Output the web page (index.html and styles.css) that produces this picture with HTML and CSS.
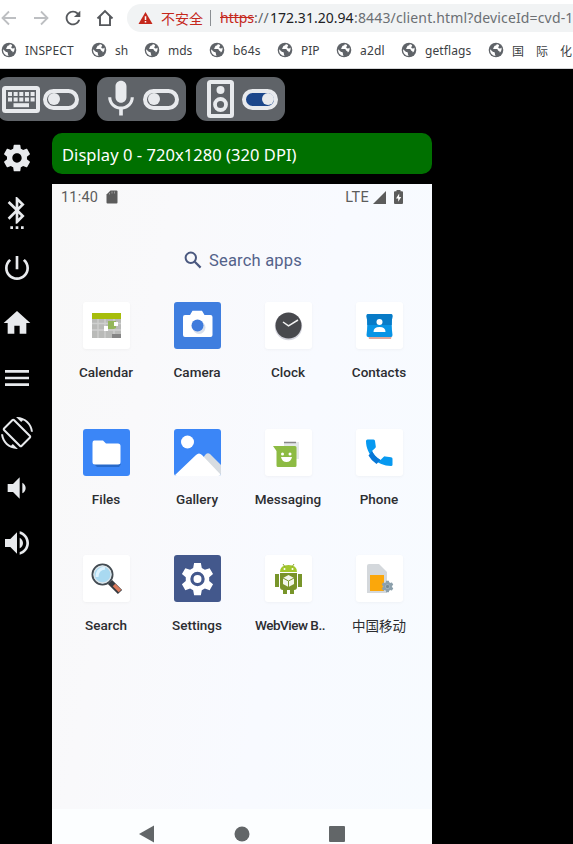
FILE: index.html
```html
<!DOCTYPE html>
<html lang="en">
<head>
<meta charset="utf-8">
<title>Device client</title>
<link rel="stylesheet" href="styles.css">
</head>
<body>
<svg class="defs" aria-hidden="true">
  <symbol id="globe" viewBox="0 0 16 16"><circle cx="8" cy="8" r="7.3" fill="#5f6368"/><path d="M2.1 7.2 4.8 9.8c.6.5 1.6.1 1.9.8.3.8.1 2.6 1 3.2C4.6 13.9 1.8 11.4 2.1 7.2ZM8.8 2.1c-.2 1.4-.7 1.6-2 1.7-.9.2-.4 1.3-1.1 1.8-.7.4-.9 1.3.1 1.5h3.1c1.1.2.8 1.7 1.8 1.9.9.1 1.1.7 1 1.6 1.6-1.2 2.3-3.3 1.7-5.2-.8 1.5-2.5 1.3-3 .4-.6-.9.6-1.2.7-2 .1-.7-.8-1.2-2.3-1.7Z" fill="#fff"/></symbol>
  <symbol id="gear" viewBox="0 0 24 24"><path d="M19.43 12.98c.04-.32.07-.64.07-.98s-.03-.66-.07-.98l2.11-1.65c.19-.15.24-.42.12-.64l-2-3.46c-.12-.22-.39-.3-.61-.22l-2.49 1c-.52-.4-1.08-.73-1.69-.98l-.38-2.65C14.46 2.18 14.25 2 14 2h-4c-.25 0-.46.18-.49.42l-.38 2.65c-.61.25-1.17.59-1.69.98l-2.49-1c-.23-.09-.49 0-.61.22l-2 3.46c-.13.22-.07.49.12.64l2.11 1.65c-.04.32-.07.65-.07.98s.03.66.07.98l-2.11 1.65c-.19.15-.24.42-.12.64l2 3.46c.12.22.39.3.61.22l2.49-1c.52.4 1.08.73 1.69.98l.38 2.65c.03.24.24.42.49.42h4c.25 0 .46-.18.49-.42l.38-2.65c.61-.25 1.17-.59 1.69-.98l2.49 1c.23.09.49 0 .61-.22l2-3.46c.12-.22.07-.49-.12-.64l-2.11-1.65zM12 15.5c-1.93 0-3.5-1.57-3.5-3.5s1.57-3.5 3.5-3.5 3.5 1.57 3.5 3.5-1.57 3.5-3.5 3.5z"/></symbol>
</svg>

<header class="browser">
  <div class="toolbar">
    <svg class="nav" viewBox="0 0 18 18"><path d="M16 9H3M9 2.5 2.5 9 9 15.500" fill="none" stroke="#bdbfc2" stroke-width="1.8"/></svg>
    <svg class="nav" viewBox="0 0 18 18"><path d="M2 9h13M9 2.500 15.500 9 9 15.500" fill="none" stroke="#bdbfc2" stroke-width="1.8"/></svg>
    <svg class="nav reload" viewBox="0 0 24 24"><path fill="#55585c" d="M17.650 6.350C16.200 4.900 14.210 4 12 4c-4.420 0-7.990 3.580-7.990 8s3.570 8 7.990 8c3.730 0 6.840-2.550 7.730-6h-2.080c-.82 2.330-3.040 4-5.650 4-3.310 0-6-2.690-6-6s2.690-6 6-6c1.660 0 3.140.69 4.220 1.780L13 11h7V4l-2.350 2.350z"/></svg>
    <svg class="nav" viewBox="0 0 18 18"><path d="M1.500 9.500 9 2l7.500 7.500M4 7.500v8.600h10V7.500" fill="none" stroke="#55585c" stroke-width="1.900"/></svg>
    <div class="address">
      <svg class="warn" viewBox="0 0 16 14"><path d="M8 .5 15.500 13.500H.5Z" fill="#c5281c"/><path d="M7.200 5h1.600v4H7.200ZM7.200 10.200h1.600v1.600H7.200Z" fill="#fff"/></svg>
      <span class="insecure">不安全</span>
      <span class="divider"></span>
      <span class="url"><span class="scheme">https</span><span class="sep">://</span><span class="host">172.31.20.94</span><span class="path">:8443/client.html?deviceId=cvd-1</span></span>
    </div>
  </div>
  <nav class="bookmarks">
    <span class="mark m1"><svg><use href="#globe"/></svg>INSPECT</span>
    <span class="mark m2"><svg><use href="#globe"/></svg>sh</span>
    <span class="mark m3"><svg><use href="#globe"/></svg>mds</span>
    <span class="mark m4"><svg><use href="#globe"/></svg>b64s</span>
    <span class="mark m5"><svg><use href="#globe"/></svg>PIP</span>
    <span class="mark m6"><svg><use href="#globe"/></svg>a2dl</span>
    <span class="mark m7"><svg><use href="#globe"/></svg>getflags</span>
    <span class="mark cjk"><svg><use href="#globe"/></svg><span>国</span><span>际</span><span>化</span></span>
  </nav>
</header>

<main class="client">
  <div class="toggles">
    <div class="pill first">
      <svg class="kb" viewBox="0 0 38 27"><rect x="2" y="2" width="34" height="23" rx="1.500" fill="none" stroke="#e8eaed" stroke-width="4"/><path d="M6 8h27M6 13.500h27" stroke="#e8eaed" stroke-width="4" stroke-dasharray="4 1.650" fill="none"/><path d="M11.500 19.200h15.500" stroke="#e8eaed" stroke-width="4"/></svg>
      <span class="switch"></span>
    </div>
    <div class="pill">
      <svg class="mic" viewBox="0 0 24 24"><path d="M12 14c1.660 0 2.990-1.340 2.990-3L15 5c0-1.660-1.340-3-3-3S9 3.340 9 5v6c0 1.660 1.340 3 3 3zm5.300-3c0 3-2.540 5.100-5.300 5.100S6.700 14 6.700 11H5c0 3.410 2.720 6.230 6 6.720V21h2v-3.280c3.280-.48 6-3.300 6-6.720h-1.700z"/></svg>
      <span class="switch"></span>
    </div>
    <div class="pill">
      <svg class="speaker" viewBox="0 0 27 38"><rect x="2" y="2" width="23" height="34" rx="1.500" fill="none" stroke="#e8eaed" stroke-width="4"/><circle cx="13.500" cy="10" r="4"/><circle cx="13.500" cy="24.500" r="5.500" fill="none" stroke="#e8eaed" stroke-width="3.800"/></svg>
      <span class="switch on"></span>
    </div>
  </div>

  <div class="workspace">
    <aside class="controls">
      <svg><use href="#gear"/></svg>
      <svg viewBox="0 0 24 24"><path d="M11 24h2v-2h-2v2zm-4 0h2v-2H7v2zm8 0h2v-2h-2v2zm2.710-18.290L12 0h-1v7.590L6.410 3 5 4.410 10.590 10 5 15.590 6.410 17 11 12.410V20h1l5.710-5.710-4.300-4.290 4.300-4.290zM13 3.830l1.880 1.880L13 7.590V3.830zm1.880 10.460L13 16.170v-3.760l1.880 1.880z"/></svg>
      <svg viewBox="0 0 24 24"><path d="M13 3h-2v10h2V3zm4.830 2.170l-1.420 1.420C17.990 7.860 19 9.810 19 12c0 3.870-3.130 7-7 7s-7-3.130-7-7c0-2.190 1.010-4.140 2.580-5.420L6.170 5.170C4.230 6.820 3 9.260 3 12c0 4.970 4.030 9 9 9s9-4.030 9-9c0-2.740-1.230-5.180-3.170-6.830z"/></svg>
      <svg viewBox="0 0 24 24"><path d="M10 20v-6h4v6h5v-8h3L12 3 2 12h3v8z"/></svg>
      <svg viewBox="0 0 24 24"><path d="M3 18h18v-2H3v2zm0-5h18v-2H3v2zm0-7v2h18V6H3z"/></svg>
      <svg viewBox="0 0 24 24"><path d="M16.480 2.520c3.270 1.550 5.610 4.720 5.970 8.480h1.500C23.440 4.840 18.290 0 12 0l-.66.03 3.810 3.810 1.330-1.320zm-6.250-.77c-.59-.59-1.540-.59-2.120 0L1.750 8.110c-.59.59-.59 1.540 0 2.120l12.020 12.020c.59.59 1.540.59 2.120 0l6.360-6.360c.59-.59.59-1.540 0-2.120L10.230 1.750zm4.600 19.440L2.810 9.170l6.360-6.360 12.020 12.020-6.360 6.360zm-7.310.29C4.250 19.940 1.910 16.760 1.550 13H.05C.56 19.160 5.710 24 12 24l.66-.03-3.810-3.810-1.330 1.320z"/></svg>
      <svg viewBox="0 0 24 24"><path d="M18.500 12c0-1.770-1.020-3.290-2.500-4.030v8.050c1.480-.73 2.500-2.250 2.500-4.020zM5 9v6h4l5 5V4L9 9H5z"/></svg>
      <svg viewBox="0 0 24 24"><path d="M3 9v6h4l5 5V4L7 9H3zm13.500 3c0-1.770-1.020-3.290-2.500-4.030v8.050c1.480-.73 2.500-2.250 2.500-4.020zM14 3.230v2.060c2.890.86 5 3.540 5 6.710s-2.110 5.850-5 6.710v2.060c4.010-.91 7-4.490 7-8.770s-2.990-7.860-7-8.770z"/></svg>
    </aside>

    <section class="display">
      <h1 class="title"><span>Display 0 - 720x1280 (320 DPI)</span></h1>
      <div class="screen">
        <div class="status">
          <span class="time">11:40</span>
          <svg class="sd" viewBox="0 0 12 14"><path d="M4.500.5H10.500a1 1 0 0 1 1 1v11a1 1 0 0 1-1 1h-9a1 1 0 0 1-1-1V4.500Z" fill="#5c5c5c"/><path d="M3.500 4.500V3M6 3.500v-2M8.500 3.500v-2" stroke="#999"/></svg>
          <span class="lte">LTE</span>
          <svg class="signal" viewBox="0 0 13 13"><path d="M13 0v13H0Z" fill="#5c5c5c"/></svg>
          <svg class="battery" viewBox="0 0 9 14"><path d="M2.500 0h4v1.300H8a1 1 0 0 1 1 1V13a1 1 0 0 1-1 1H1a1 1 0 0 1-1-1V2.300a1 1 0 0 1 1-1h1.500Z" fill="#5c5c5c"/><path d="M5.200 3.500 2 8.400h2.200v3.400L7.200 7H5.200Z" fill="#fff"/></svg>
        </div>
        <div class="search">
          <svg viewBox="0 0 18 18"><circle cx="6.800" cy="6.800" r="5.200" fill="none" stroke="#4a587f" stroke-width="2"/><path d="m10.800 10.800 5.800 5.800" stroke="#4a587f" stroke-width="2.200"/></svg>
          <span>Search apps</span>
        </div>
        <div class="apps">
          <div class="app"><svg class="tile plain" viewBox="0 0 47 47"><path d="M9 16h29v20H9Z" fill="#b9bab8"/><path d="M9 11h29v6H9Z" fill="#a7bd0a"/><path d="M9 21.500h29M9 28h29M15 17v19M22 17v19M31 17v19" stroke="#cfd0cf" stroke-width="1.300"/><path d="M29 32h9v4h-9Z" fill="#858585"/><path d="M25 19h8v7l-2 1h-6Z" fill="#94b65b"/><path d="M21 24h4v5h-4ZM31 20h4v4h-4Z" fill="#fff"/></svg><span>Calendar</span></div>
          <div class="app"><svg class="tile blue" viewBox="0 0 47 47"><path d="M11 13h5l2.500-4.200h9.500l2.500 4.200h6q2 0 2 2v18q0 2-2 2H11q-2 0-2-2V15q0-2 2-2Z" fill="#fff"/><circle cx="25" cy="25.500" r="6.500" fill="#d9e0ec"/><circle cx="23.500" cy="23.500" r="6" fill="#3f7bdc"/></svg><span>Camera</span></div>
          <div class="app"><svg class="tile plain" viewBox="0 0 47 47"><circle cx="23.500" cy="24.500" r="13.700" fill="#d5d5de"/><circle cx="23.500" cy="23.500" r="13" fill="#48494d"/><path d="m18 20 5.500 3.800L33 18" fill="none" stroke="#f1f1f1" stroke-width="1.500"/></svg><span>Clock</span></div>
          <div class="app"><svg class="tile plain" viewBox="0 0 47 47"><path d="M12 33h24l-1 4H13Z" fill="#e0a79b"/><path d="M12 12h23q1.500 0 1.500 2-1.500 8 0 19 0 2-1.500 2H12q-1.500 0-1.500-2 1.500-11 0-19 0-2 1.500-2Z" fill="#0994e5"/><path d="M12 12h23q1.500 0 1.500 2-1 5-.8 9H11.300q.2-4-.8-9 0-2 1.500-2Z" fill="#087bc7"/><circle cx="23.500" cy="20" r="3" fill="#fff"/><path d="M17.500 30q0-5 6-5t6 5Z" fill="#fff"/></svg><span>Contacts</span></div>
          <div class="app"><svg class="tile blue bright" viewBox="0 0 47 47"><path d="m11 35 3 3h22l2-3Z" fill="#2769c9"/><path d="M11 11.500h9l3 3h12q2.500 0 2.500 2.500v16q0 2.500-2.500 2.500H12q-2.500 0-2.500-2.500V14q0-2.500 1.500-2.500Z" fill="#fff"/></svg><span>Files</span></div>
          <div class="app"><svg class="tile blue bright" viewBox="0 0 47 47"><circle cx="13.500" cy="13" r="6.500" fill="#fff"/><path d="m25 47 3-17 4-5q2-1.500 4 0l11 11v11Z" fill="#d7dce1"/><path d="M0 47 22 26q3-3 6 0l19 20v1Z" fill="#fff"/></svg><span>Gallery</span></div>
          <div class="app"><svg class="tile plain" viewBox="0 0 47 47"><path d="M19 13h15v17H19Z" fill="#e4e8e8"/><path d="M19 13.500h12" stroke="#888" stroke-width="1.500"/><path d="M8 17h22q1.500 0 1.500 1.500v18q0 1.500-1.500 1.500H13q-1.500 0-1.500-1.500V22Z" fill="#8dbb43"/><circle cx="17.500" cy="25" r="1.500" fill="#fff"/><circle cx="25" cy="25" r="1.500" fill="#fff"/><path d="M16 28h11q-1 5-5.500 5T16 28Z" fill="#fff"/></svg><span>Messaging</span></div>
          <div class="app"><svg class="tile plain" viewBox="0 0 47 47"><path d="M11.500 10.500h6q1.500 0 1.500 1.500l.8 5.500q.1 1-.8 1.700l-3 2.800q3 6 8.500 9l3-3q.8-.8 1.800-.6l5.700.8q1.500.2 1.500 1.500v6q0 1.300-1.500 1.300C21.500 37 10 25.500 10 12q0-1.500 1.500-1.500Z" fill="#0799f0"/><path d="m16 22q3 6 8.500 9l-4 4q-5-3-8-8.500Z" fill="#0877d6"/></svg><span>Phone</span></div>
          <div class="app"><svg class="tile plain" viewBox="0 0 47 47"><path d="m27 27 10 10" stroke="#363b40" stroke-width="6"/><path d="m31 30 6 6" stroke="#db795a" stroke-width="3.500"/><circle cx="19.500" cy="19.500" r="10" fill="#a9d9f1" stroke="#444c53" stroke-width="2"/><circle cx="19.500" cy="19.500" r="8.500" fill="none" stroke="#dce4e8" stroke-width="1.300"/><path d="M14 22q0-8 8-9" fill="none" stroke="#ddf3ff" stroke-width="3"/></svg><span>Search</span></div>
          <div class="app"><svg class="tile blue navy" viewBox="0 0 47 47"><g transform="translate(5 5) scale(1.540)" fill="#fff"><path d="M9.800 2h4.400l.6 3.200 2 1.200 3.100-1.100 2.200 3.800-2.500 2.100v2.500l2.500 2.100-2.200 3.800-3.100-1.100-2 1.200-.6 3.200H9.800l-.6-3.200-2-1.200-3.100 1.100-2.200-3.800 2.500-2.100v-2.500L1.900 9.100l2.200-3.800 3.100 1.100 2-1.200Z"/></g><circle cx="23.500" cy="24" r="5.600" fill="#fff" stroke="#43588c" stroke-width="3.200"/></svg><span>Settings</span></div>
          <div class="app"><svg class="tile plain" viewBox="0 0 47 47"><path d="M10 19h4v13h-4ZM33 19h4v13h-4ZM18 33h4v6h-4ZM25 33h4v6h-4Z" fill="#78952a"/><path d="M15 18h17v14q0 3-3 3H18q-3 0-3-3Z" fill="#799329"/><path d="M15 17q0-7 8.500-7t8.500 7Z" fill="#a2c62c"/><path d="m18 9 2 3m9-3-2 3" stroke="#8ba82c"/><circle cx="19.500" cy="14" r="1" fill="#fff"/><circle cx="27.500" cy="14" r="1" fill="#fff"/><path d="m23.500 20 5.500 3v6l-5.500 3-5.500-3v-6Z" fill="#f2f5eb"/><path d="m18 23 5.500 3 5.500-3m-5.500 3v6" fill="none" stroke="#789329"/></svg><span class="tight">WebView B..</span></div>
          <div class="app"><svg class="tile plain" viewBox="0 0 47 47"><path d="M13 9h10l8 8v21H11V11q0-2 2-2Z" fill="#d4d8dc"/><path d="M14 20h14v16H14Z" fill="#fba70b"/><svg x="24.500" y="24.500" width="14" height="14" viewBox="0 0 24 24"><circle cx="12" cy="12" r="8" fill="#cbd7de"/><use href="#gear" fill="#8ca0ac"/><circle cx="12" cy="12" r="3" fill="#748995"/></svg></svg><span class="han">中国移动</span></div>
        </div>
        <div class="navbar">
          <svg viewBox="0 0 16 18"><path d="M0 9 15 .5v17Z"/></svg>
          <svg viewBox="0 0 16 18"><circle cx="8" cy="9" r="7.500"/></svg>
          <svg viewBox="0 0 16 18"><rect y="1" width="16" height="16" rx="1"/></svg>
        </div>
      </div>
    </section>
  </div>
</main>
</body>
</html>
```
FILE: styles.css
```css
* { box-sizing: border-box; }
body {
  margin: 0;
  width: 573px;
  height: 844px;
  overflow: hidden;
  background: #000;
  font-family: "Noto Sans", "Noto Sans CJK SC", sans-serif;
}
svg { display: block; flex: none; }
.defs { display: none; }

.browser { height: 69px; background: #fff; border-bottom: 1px solid #d5d6d8; overflow: hidden; }
.toolbar { display: flex; align-items: center; height: 36px; gap: 14px; }
.nav { width: 18px; height: 18px; }
.nav.reload { width: 22px; height: 22px; margin: 0 -2px; }
.address {
  display: flex;
  align-items: center;
  flex: none;
  width: 500px;
  height: 28px;
  margin-left: -1px;
  padding-left: 11px;
  border-radius: 14px 0 0 14px;
  background: #f1f3f4;
  font-size: 14px;
  white-space: nowrap;
}
.warn { width: 15px; height: 14px; }
.insecure { margin-left: 8px; width: 42px; color: #c5281c; font-family: "Noto Sans CJK SC", sans-serif; font-weight: 400; }
.divider { width: 1px; height: 16px; margin: 0 9px 0 7px; background: #8b8f93; }
.url { display: flex; margin-top: -2px; }
.scheme { color: #c5281c; text-decoration: line-through; width: 34px; }
.sep { color: #5f6368; width: 16px; letter-spacing: .3px; }
.host { color: #202124; width: 84px; letter-spacing: .02px; }
.path { color: #6b6f73; letter-spacing: .15px; }

.bookmarks { display: flex; align-items: center; height: 28px; padding-left: 1px; font-size: 12px; color: #3c4043; white-space: nowrap; }
.mark { display: flex; align-items: center; flex: none; gap: 8px; }
.mark svg { width: 16px; height: 16px; }
.m1 { width: 90px; letter-spacing: .1px; }
.m2 { width: 53px; }
.m3 { width: 65px; }
.m4 { width: 68px; letter-spacing: .2px; }
.m5 { width: 59px; }
.m6 { width: 65px; letter-spacing: .2px; }
.m7 { width: 87px; letter-spacing: .1px; }
.cjk { gap: 12px; font-family: "Noto Sans CJK SC", sans-serif; font-weight: 400; }
.cjk svg { margin-right: -4px; }

.toggles { display: flex; gap: 10.500px; padding-top: 8px; margin-left: -3px; height: 52px; }
.pill { display: flex; align-items: center; justify-content: flex-end; width: 89px; height: 44px; padding-right: 7px; border-radius: 11px; background: #5f6368; fill: #e8eaed; }
.kb { width: 38px; height: 27px; margin-right: 3px; }
.mic { width: 44px; height: 44px; }
.speaker { width: 27px; height: 38px; margin-right: 8px; }
.switch { display: flex; flex: none; align-items: center; width: 36px; height: 21px; border: 4px solid #e8eaed; border-radius: 11px; }
.switch::before { content: ""; width: 12px; height: 12px; border-radius: 50%; background: #e8eaed; margin-left: 1px; }
.switch.on { background: #1c478b; justify-content: flex-end; }

.workspace { display: flex; }
.controls { display: flex; flex-direction: column; gap: 23px; width: 52px; padding: 21px 0 0 1px; fill: #e8eaed; }
.controls svg { width: 32px; height: 32px; }
.display { width: 380px; padding-top: 12px; }
.title { height: 41px; margin: 0; padding: 0 10px; border-radius: 10px; background: #007000; color: #fff; font-size: 16.500px; font-weight: 400; line-height: 43px; white-space: nowrap; }
.title span { letter-spacing: .05px; }
.screen { margin-top: 10px; height: 660px; background: linear-gradient(100deg, #f8f8f8 0, #f9f9fb 25%, #f8faff 60%, #f7fbff 100%); font-family: Roboto, "Noto Sans CJK SC", sans-serif; }
.status { display: flex; align-items: center; height: 26px; padding: 0 29px 0 9px; font-size: 14.500px; color: #5c5c5c; }
.time { width: 45px; letter-spacing: .2px; }
.sd { width: 12px; height: 14px; }
.lte { margin-left: auto; letter-spacing: .3px; }
.signal { width: 13px; height: 13px; margin-left: 4px; }
.battery { width: 9px; height: 14px; margin-left: 8px; }
.search { display: flex; align-items: center; height: 34px; margin: 33px 0 0 132px; gap: 7px; color: #53628a; font-size: 16.500px; letter-spacing: .2px; }
.search svg { width: 18px; height: 18px; }
.apps { display: grid; grid-template-columns: repeat(4, 91px); grid-auto-rows: 126.500px; margin: 25px 0 0 8.500px; height: 507px; }
.app { display: flex; flex-direction: column; align-items: center; font-size: 13.500px; font-weight: 500; line-height: 18px; color: #2c2d31; white-space: nowrap; }
.tile { width: 47px; height: 47px; margin-bottom: 14px; border-radius: 3px; background: #fff; }
.plain { box-shadow: 0 1px 3px #0000000a; }
.blue { background: #3f7edf; }
.bright { background: #3b86f7; }
.navy { background: #43588c; }
.tight { letter-spacing: -.5px; margin-left: 4px; }
.han { font-family: "Noto Sans CJK SC", sans-serif; font-weight: 400; }
.navbar { display: flex; justify-content: center; gap: 79px; height: 35px; padding-top: 16px; background: #fcfeff; fill: #626668; }
.navbar svg { width: 16px; height: 18px; }
```
